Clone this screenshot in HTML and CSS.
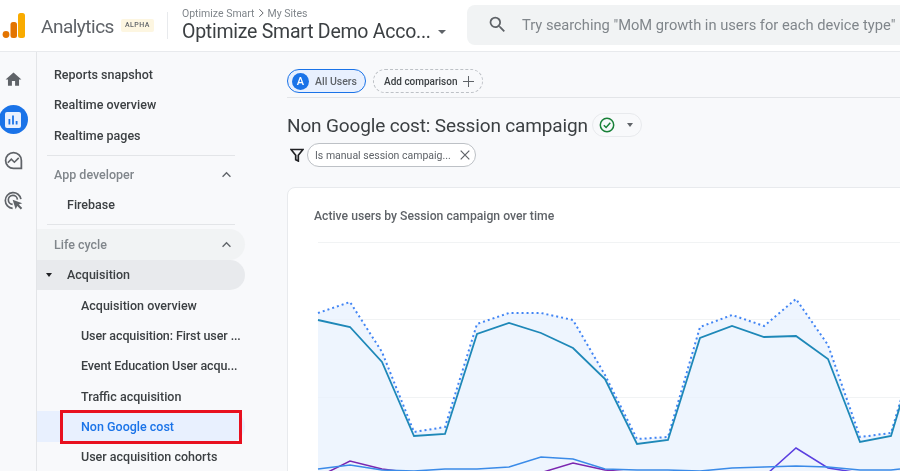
FILE: index.html
```html
<!DOCTYPE html>
<html lang="en">
<head>
<meta charset="utf-8">
<title>Analytics</title>
<link rel="stylesheet" href="styles.css">
</head>
<body>
<div class="app">
  <header class="topbar">
    <svg class="logo" viewBox="0 0 24 26" width="24" height="26"><rect x="16" y="0" width="7" height="25" rx="2.500" fill="#f9ab00"/><rect x="8.500" y="9" width="6.500" height="16" rx="2.500" fill="#e37400"/><circle cx="4" cy="21.500" r="3.400" fill="#e37400"/></svg>
    <span class="brand">Analytics</span>
    <span class="alpha">ALPHA</span>
    <span class="vsep"></span>
    <div class="account">
      <div class="crumbs"><span>Optimize Smart</span><svg viewBox="0 0 8 12" width="7" height="10"><path d="M1.500 1.500 6 6l-4.500 4.500" fill="none" stroke="#5f6368" stroke-width="1.200"/></svg><span>My Sites</span></div>
      <div class="acct-title"><span>Optimize Smart Demo Acco...</span><i class="caret caret-title"></i></div>
    </div>
    <div class="search">
      <svg viewBox="0 0 24 24" width="21" height="21"><path fill="#5f6368" d="M15.500 14h-.79l-.28-.27A6.470 6.470 0 0 0 16 9.500 6.500 6.500 0 1 0 9.500 16c1.610 0 3.090-.59 4.230-1.570l.27.28v.79l5 4.990L20.490 19zm-6 0C7.010 14 5 11.990 5 9.500S7.010 5 9.500 5 14 7.010 14 9.500 11.990 14 9.500 14"/></svg>
      <span>Try searching "MoM growth in users for each device type"</span>
    </div>
  </header>
  <div class="body">
    <nav class="rail">
      <svg class="rail-home" viewBox="0 0 24 24" width="19" height="19"><path fill="#5f6368" d="M10 20v-6h4v6h5v-8h3L12 3 2 12h3v8z"/></svg>
      <span class="rail-active"><svg viewBox="0 0 16 16" width="16" height="16"><rect width="16" height="16" rx="2" fill="#e8f0fe"/><path fill="#1a73e8" d="M3.500 7h1.800v5.500H3.500zM7.100 3.500h1.800v9H7.100zM10.700 9h1.800v3.500h-1.800z"/></svg></span>
      <svg class="rail-insights" viewBox="0 0 24 24" width="21" height="21"><path fill="none" stroke="#5f6368" stroke-width="2" d="M12 3a9 9 0 1 0 0 18h9v-9a9 9 0 0 0-9-9z"/><path fill="none" stroke="#5f6368" stroke-width="1.800" d="M5.500 14.500 9.500 10.500l3.500 3.500 5-5"/></svg>
      <svg class="rail-target" viewBox="0 0 24 24" width="21" height="21"><path fill="none" stroke="#5f6368" stroke-width="1.900" d="M20.500 10.500A9 9 0 1 0 11 21M16.500 11a5.200 5.200 0 1 0-5.500 5.500"/><path fill="#5f6368" d="M11 11l11 4-4 1.700 4 4-1.700 1.700-4-4L14.500 22z"/></svg>
    </nav>
    <aside class="nav">
      <a class="row">Reports snapshot</a>
      <a class="row">Realtime overview</a>
      <a class="row">Realtime pages</a>
      <hr class="nav-rule rule-one">
      <a class="row section">App developer<svg class="chev" viewBox="0 0 12 8" width="11" height="7"><path d="M1.500 6.500 6 2l4.500 4.500" fill="none" stroke="#5f6368" stroke-width="1.500"/></svg></a>
      <a class="row sub">Firebase</a>
      <hr class="nav-rule rule-two">
      <a class="row section pill-light">Life cycle<svg class="chev" viewBox="0 0 12 8" width="11" height="7"><path d="M1.500 6.500 6 2l4.500 4.500" fill="none" stroke="#5f6368" stroke-width="1.500"/></svg></a>
      <a class="row sub pill-grey"><i class="caret caret-nav"></i>Acquisition</a>
      <a class="row leaf">Acquisition overview</a>
      <a class="row leaf narrow">User acquisition: First user ...</a>
      <a class="row leaf narrow">Event Education User acqu...</a>
      <a class="row leaf">Traffic acquisition</a>
      <a class="row leaf active">Non Google cost<span class="redbox"></span></a>
      <a class="row leaf">User acquisition cohorts</a>
    </aside>
    <main class="main">
      <div class="compare">
        <span class="chip-user"><b>A</b>All Users</span>
        <span class="chip-add">Add comparison<svg viewBox="0 0 12 12" width="11" height="11"><path d="M6 0v12M0 6h12" stroke="#5f6368" stroke-width="1.100"/></svg></span>
      </div>
      <div class="title-row">
        <h1>Non Google cost: Session campaign</h1>
        <span class="status"><svg viewBox="0 0 16 16" width="16" height="16"><circle cx="8" cy="8" r="6.700" fill="none" stroke="#188038" stroke-width="1.500"/><path d="M4.800 8.200 7.100 10.500 11.300 5.800" fill="none" stroke="#188038" stroke-width="1.500"/></svg><i class="caret caret-status"></i></span>
      </div>
      <div class="filter-row">
        <svg viewBox="0 0 14 14" width="14" height="14"><path d="M1 1.500h12L8.300 7.200V13l-2.600-1.300V7.200z" fill="none" stroke="#202124" stroke-width="1.700"/></svg>
        <span class="chip-filter">Is manual session campaig...<svg viewBox="0 0 10 10" width="10" height="10"><path d="M.7.7l8.600 8.600M9.300.7.7 9.300" stroke="#5f6368" stroke-width="1.200"/></svg></span>
      </div>
      <section class="card">
        <h2>Active users by Session campaign over time</h2>
        <svg class="chart" viewBox="318 242 582 229" width="582" height="229">
          <path class="grid" d="M318 242.500H900M318 319.500H900M318 397.500H900"/>
          <path fill="#e8f1fe" fill-opacity=".75" d="M318 313 350 302 382 352 414 432 445 427 477 324 509 313 541 313 573 320 605 375 637 439 668 437 700 327 732 315 764 326 796 299 828 345 860 437 891 433 923 325V471H318z"/>
          <path class="dotted" d="M318 313 350 302 382 352 414 432 445 427 477 324 509 313 541 313 573 320 605 375 637 439 668 437 700 327 732 315 764 326 796 299 828 345 860 437 891 433 923 325"/>
          <path class="solid" d="M318 320 350 327 382 362 414 436 445 434 477 334 509 323 541 333 573 348 605 379 637 444 668 440 700 338 732 326 764 337 796 336 828 359 860 442 891 436 923 330"/>
          <path class="line-purple" d="M326 473 350 461 382 469 414 473M540 473 573 463 605 470 637 473"/>
          <path class="line-violet" d="M768 473 796 448 828 468 860 473"/>
          <path class="line-blue" d="M318 469 350 465 382 470 414 471 445 469 477 469 509 467 541 457 573 459 605 469 637 470 668 470 700 471 732 468 764 467 796 466 828 467 860 470 891 470 900 469"/>
        </svg>
      </section>
    </main>
  </div>
</div>
</body>
</html>
```

FILE: styles.css
```css
* { box-sizing: border-box; }
html, body { margin: 0; height: 100%; overflow: hidden; }
body { font-family: Roboto, "Open Sans", sans-serif; color: #3c4043; background: #fff; }
.app { width: 900px; height: 471px; display: flex; flex-direction: column; overflow: hidden; filter: blur(.45px); }

.topbar { flex: 0 0 52px; display: flex; align-items: center; background: #fff; border-bottom: 1px solid #e8eaed; padding-left: 2px; }
.logo { flex: none; margin-top: 1px; }
.brand { font-size: 19px; color: #5f6368; margin: 2px 0 0 15px; letter-spacing: -.5px; }
.alpha { margin-left: 7px; background: #fdf6e1; color: #5f6368; font-size: 7px; font-weight: 500; letter-spacing: .5px; padding: 3px 4px; height: 13px; line-height: 7px; border-radius: 2px; }
.vsep { width: 1px; height: 27px; background: #e8eaed; margin-left: 13px; }
.account { margin-left: 14px; width: 285px; flex: none; margin-top: -1px; }
.crumbs { display: flex; align-items: center; gap: 3px; font-size: 10.500px; color: #80868b; height: 14px; }
.acct-title { display: flex; align-items: center; font-size: 19.500px; letter-spacing: -.25px; color: #3c4043; height: 25px; margin-top: -1px; }
.caret { display: inline-block; width: 0; height: 0; border-left: 4px solid transparent; border-right: 4px solid transparent; border-top: 4px solid #5f6368; }
.caret-title { margin-left: 7px; margin-top: 1px; }
.search { flex: 1; height: 40px; margin-bottom: 2px; background: #f1f3f4; border-radius: 8px 0 0 8px; display: flex; align-items: center; padding-left: 20px; gap: 14px; font-size: 14.700px; color: #80868b; white-space: nowrap; overflow: hidden; }

.body { flex: 1; display: flex; min-height: 0; background: #f8f9fb; }
.rail { flex: 0 0 37px; min-width: 0; border-right: 1px solid #e3e5e8; display: flex; flex-direction: column; align-items: center; padding: 18px 10px 0 0; }
.rail svg, .rail span { flex: none; }
.rail-active { width: 29px; height: 29px; margin-top: 16px; border-radius: 50%; background: #1a73e8; display: flex; align-items: center; justify-content: center; }
.rail-insights { margin-top: 16px; }
.rail-target { margin-top: 19px; }

.nav { flex: 0 0 250px; padding: 7.500px 0 0 0; overflow: hidden; }
.row { position: relative; display: flex; align-items: center; height: 30.300px; width: 208px; padding-left: 17px; font-size: 12.500px; font-weight: 500; color: #3c4043; white-space: nowrap; border-radius: 0 16px 16px 0; }
.section { color: #80868b; justify-content: space-between; padding-right: 13px; }
.sub { padding-left: 30px; }
.leaf { padding-left: 44px; }
.narrow { letter-spacing: -.1px; }
.pill-light { background: #f1f3f4; }
.pill-grey { background: #e8eaed; }
.active { background: #e8f0fe; color: #1a73e8; }
.redbox { position: absolute; left: 23px; top: -1px; width: 182px; height: 34px; border: 3px solid #e8101f; }
.nav-rule { width: 188px; height: 1px; margin: 4.500px 0 3.500px 10px; border: 0; background: #e3e5e8; }
.rule-two { margin-bottom: 4px; }
.caret-nav { position: absolute; left: 9px; top: 13px; border-top-color: #202124; border-left-width: 3.500px; border-right-width: 3.500px; }

.main { flex: 1; min-width: 0; padding-top: 17px; }
.compare { display: flex; align-items: center; gap: 7px; height: 29px; padding-bottom: 4px; border-bottom: 1px solid #e3e5e8; }
.chip-user { height: 24px; width: 79px; display: flex; align-items: center; gap: 6px; padding-left: 4px; border: 1px solid #1a73e8; border-radius: 12px; background: #e8f0fe; font-size: 10.500px; font-weight: 500; color: #5f6368; }
.chip-user b { width: 17px; height: 17px; border-radius: 50%; background: #1a73e8; color: #fff; font-size: 11px; font-weight: 500; display: flex; align-items: center; justify-content: center; }
.chip-add { height: 24px; width: 110px; display: flex; align-items: center; gap: 6px; padding-left: 10px; border: 1px dashed #bdc1c6; border-radius: 12px; font-size: 10px; font-weight: 500; color: #3c4043; }
.title-row { display: flex; align-items: center; margin-top: 15px; height: 24px; gap: 4px; }
h1 { margin: 0; font-size: 19px; letter-spacing: -.15px; font-weight: 400; color: #3c4043; white-space: nowrap; }
.status { width: 50px; height: 24px; display: flex; align-items: center; gap: 12px; padding-left: 6px; border: 1px solid #e8eaed; border-radius: 12px; }
.caret-status { border-left-width: 3.500px; border-right-width: 3.500px; }
.filter-row { display: flex; align-items: center; margin-top: 6px; padding-left: 3px; height: 24px; }
.chip-filter { margin-left: 3px; width: 169px; height: 24px; display: flex; align-items: center; justify-content: space-between; padding: 0 5px 0 7px; border: 1px solid #bdc1c6; border-radius: 12px; background: #fff; font-size: 10.500px; color: #5f6368; white-space: nowrap; }
.card { margin-top: 20px; width: 640px; height: 300px; background: #fff; border: 1px solid #e8eaed; border-radius: 8px 0 0 0; padding: 21px 0 0 26px; }
h2 { margin: 0; font-size: 12.200px; font-weight: 500; color: #5f6368; line-height: 14px; }
.chart { display: block; margin: 19px 0 0 4px; overflow: visible; }
.grid { stroke: #f1f3f4; fill: none; }
.dotted { fill: none; stroke: #4285f4; stroke-width: 2; stroke-dasharray: 2 3; }
.solid { fill: none; stroke: #1e88b8; stroke-width: 1.800; }
.line-purple { fill: none; stroke: #7b27b0; stroke-width: 1.500; }
.line-violet { fill: none; stroke: #5a3fe0; stroke-width: 1.500; }
.line-blue { fill: none; stroke: #3b8be8; stroke-width: 1.600; }
```
